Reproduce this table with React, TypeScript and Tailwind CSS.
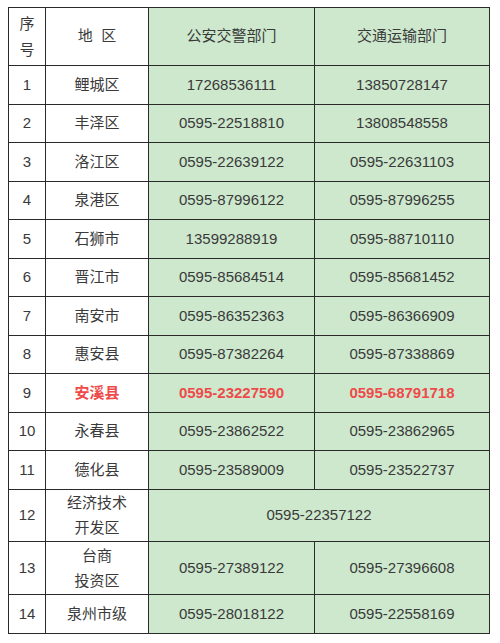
const rows: [string, string, string, string][] = [
  ["1", "鲤城区", "17268536111", "13850728147"],
  ["2", "丰泽区", "0595-22518810", "13808548558"],
  ["3", "洛江区", "0595-22639122", "0595-22631103"],
  ["4", "泉港区", "0595-87996122", "0595-87996255"],
  ["5", "石狮市", "13599288919", "0595-88710110"],
  ["6", "晋江市", "0595-85684514", "0595-85681452"],
  ["7", "南安市", "0595-86352363", "0595-86366909"],
  ["8", "惠安县", "0595-87382264", "0595-87338869"],
  ["9", "安溪县", "0595-23227590", "0595-68791718"],
  ["10", "永春县", "0595-23862522", "0595-23862965"],
  ["11", "德化县", "0595-23589009", "0595-23522737"],
];

const cell = "border border-[#2a2a2a] text-center align-middle p-0";
const green = "bg-[#cde8cd]";

export default function App() {
  return (
    <div
      className="w-[500px] h-[643px] bg-white pt-[7px] pl-[8px] text-[15px] text-[#3a3a3a]"
      style={{ fontFamily: '"Liberation Sans", "Noto Sans CJK SC", sans-serif' }}
    >
      <table className="border-collapse table-fixed w-[481px] border-[1.5px] border-[#2a2a2a]">
        <colgroup>
          <col className="w-[37px]" />
          <col className="w-[103px]" />
          <col className="w-[166px]" />
          <col className="w-[175px]" />
        </colgroup>
        <tbody>
          <tr className="h-[58px]">
            <td className={cell + " leading-[26px]"}>
              序<br />号
            </td>
            <td className={cell}>地&nbsp;&nbsp;区</td>
            <td className={cell + " " + green}>公安交警部门</td>
            <td className={cell + " " + green}>交通运输部门</td>
          </tr>
          {rows.map(([n, area, police, traffic]) => {
            const red = n === "9";
            const tone = red ? " text-[#ef4a4a] font-bold" : "";
            return (
              <tr key={n} className="h-[38.5px]">
                <td className={cell}>{n}</td>
                <td className={cell + tone}>{area}</td>
                <td className={cell + " " + green + tone}>{police}</td>
                <td className={cell + " " + green + tone}>{traffic}</td>
              </tr>
            );
          })}
          <tr className="h-[52.5px]">
            <td className={cell}>12</td>
            <td className={cell + " leading-[25px]"}>
              经济技术<br />开发区
            </td>
            <td colSpan={2} className={cell + " " + green}>
              0595-22357122
            </td>
          </tr>
          <tr className="h-[53px]">
            <td className={cell}>13</td>
            <td className={cell + " leading-[25px]"}>
              台商<br />投资区
            </td>
            <td className={cell + " " + green}>0595-27389122</td>
            <td className={cell + " " + green}>0595-27396608</td>
          </tr>
          <tr className="h-[39px]">
            <td className={cell}>14</td>
            <td className={cell}>泉州市级</td>
            <td className={cell + " " + green}>0595-28018122</td>
            <td className={cell + " " + green}>0595-22558169</td>
          </tr>
        </tbody>
      </table>
    </div>
  );
}
